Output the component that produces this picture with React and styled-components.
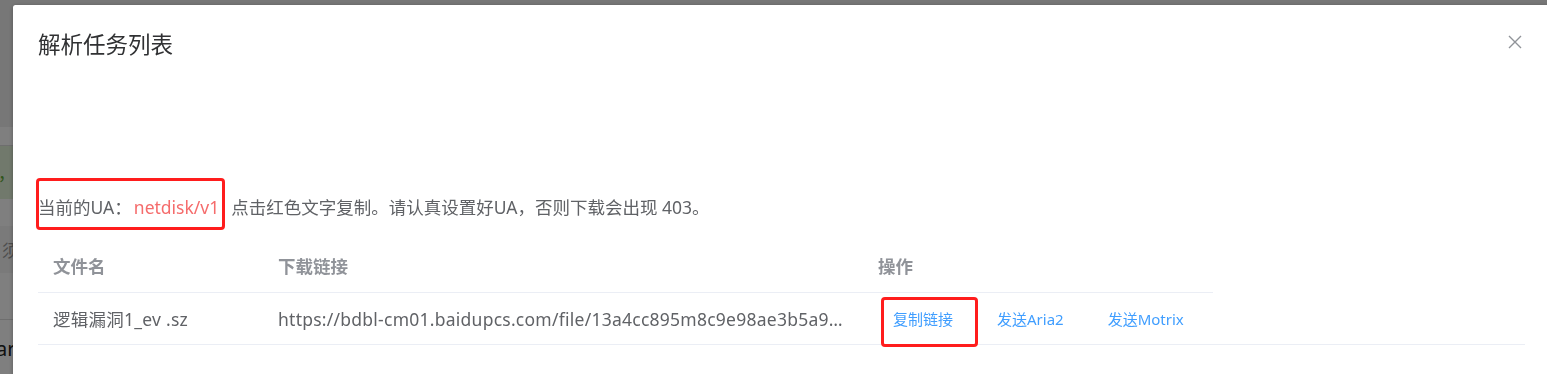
import React from "react";
import styled, { createGlobalStyle, css } from "styled-components";

const GlobalStyle = createGlobalStyle`
  html, body {
    margin: 0;
    padding: 0;
    overflow: hidden;
    background: #fff;
  }
  body {
    font-family: "Noto Sans", "Noto Sans CJK SC", sans-serif;
  }
`;

const tasks = [
  {
    name: "逻辑漏洞1_ev .sz",
    link: "https://bdbl-cm01.baidupcs.com/file/13a4cc895m8c9e98ae3b5a9f0c2d7e41b?bkt=en-2e2b5030",
  },
];

function CloseIcon() {
  return (
    <svg width="14" height="14" viewBox="0 0 14 14" fill="none">
      <path d="M1 1L13 13M13 1L1 13" stroke="#909399" strokeWidth="1.4" />
    </svg>
  );
}

function App() {
  return (
    <>
      <GlobalStyle />
      <Page>
        <PageRow $h={127} $bg="#eeeeee" />
        <PageRow $h={18} $bg="#ffffff" $line />
        <PageRow $h={53} $bg="#e2f2d9">
          <GreenText>，[</GreenText>
        </PageRow>
        <PageRow $h={27} $bg="#ffffff" />
        <PageRow $h={47} $bg="#f4f4f4">
          <GrayText>须</GrayText>
        </PageRow>
        <PageRow $h={46} $bg="#ffffff" $line />
        <PageRow $h={56} $bg="#ffffff">
          <DarkText>ar</DarkText>
        </PageRow>
      </Page>

      <Overlay>
        <Dialog>
          <Header>
            <Title>解析任务列表</Title>
            <CloseButton aria-label="close">
              <CloseIcon />
            </CloseButton>
          </Header>

          <Body>
            <UaLine>
              <Marked>
                当前的UA：<UaValue>netdisk/v1</UaValue>
              </Marked>
              <Hint>点击红色文字复制。请认真设置好UA，否则下载会出现 403。</Hint>
            </UaLine>

            <TableWrap>
              <Table>
                <colgroup>
                  <col style={{ width: 225 }} />
                  <col style={{ width: 600 }} />
                  <col style={{ width: 350 }} />
                </colgroup>
                <thead>
                  <tr>
                    <Th>文件名</Th>
                    <Th>下载链接</Th>
                    <Th>操作</Th>
                  </tr>
                </thead>
                <tbody>
                  {tasks.map((t) => (
                    <tr key={t.link}>
                      <Td>
                        <Cell>{t.name}</Cell>
                      </Td>
                      <Td>
                        <Cell>{t.link}</Cell>
                      </Td>
                      <Td>
                        <Actions>
                          <LinkButton $annotated>复制链接</LinkButton>
                          <LinkButton>发送Aria2</LinkButton>
                          <LinkButton>发送Motrix</LinkButton>
                        </Actions>
                      </Td>
                    </tr>
                  ))}
                </tbody>
              </Table>
            </TableWrap>
          </Body>
        </Dialog>
      </Overlay>
    </>
  );
}

const Page = styled.div`
  width: 1547px;
  height: 374px;
  display: flex;
  flex-direction: column;
`;

const PageRow = styled.div`
  height: ${(p) => p.$h}px;
  background: ${(p) => p.$bg};
  border-bottom: ${(p) => (p.$line ? "1px solid #dcdcdc" : "none")};
  display: flex;
  align-items: center;
  font-size: 17px;
  flex-shrink: 0;
`;

const GreenText = styled.span`
  color: #5daa32;
  margin-left: -2px;
`;

const GrayText = styled.span`
  color: #999;
  margin-left: 2px;
`;

const DarkText = styled.span`
  color: #222;
  font-size: 20px;
  margin-left: -4px;
`;

const Overlay = styled.div`
  position: fixed;
  inset: 0;
  background: rgba(0, 0, 0, 0.5);
  padding: 5px 0 0 13px;
  box-sizing: border-box;
`;

const Dialog = styled.div`
  width: 1537px;
  background: #fff;
  border-radius: 2.5px;
  box-shadow: 0 1px 4px rgba(0, 0, 0, 0.3);
  box-sizing: border-box;
  font-family: "Noto Sans", "Noto Sans CJK SC", sans-serif;
`;

const Header = styled.div`
  position: relative;
  padding: 25px 25px 12.5px;
`;

const Title = styled.span`
  display: block;
  font-size: 22.5px;
  line-height: 30px;
  color: #303133;
`;

const CloseButton = styled.button`
  position: absolute;
  top: 27px;
  right: 25px;
  width: 20px;
  height: 20px;
  padding: 0;
  border: none;
  background: transparent;
  display: flex;
  align-items: center;
  justify-content: center;
  cursor: pointer;
`;

const Body = styled.div`
  padding: 37.5px 25px;
  color: #606266;
  font-size: 17.5px;
`;

const UaLine = styled.div`
  margin-top: 84px;
  line-height: 26px;
  display: flex;
  align-items: center;
  gap: 12px;
`;

const annotation = css`
  position: relative;
  &::after {
    content: "";
    position: absolute;
    border: 3px solid #ff1d1d;
    border-radius: 4px;
    pointer-events: none;
  }
`;

const Marked = styled.span`
  ${annotation}
  &::after {
    top: -16px;
    bottom: -10px;
    left: -2px;
    right: -6px;
  }
`;

const UaValue = styled.span`
  color: #f56c6c;
  margin-left: 2px;
  cursor: pointer;
`;

const Hint = styled.span`
  color: #606266;
`;

const TableWrap = styled.div`
  margin-top: 21px;
  border-bottom: 1px solid #ebeef5;
`;

const Table = styled.table`
  width: 1175px;
  table-layout: fixed;
  border-collapse: collapse;
`;

const Th = styled.th`
  text-align: left;
  font-weight: 700;
  color: #909399;
  font-size: 17.5px;
  line-height: 23px;
  padding: 14px 15px;
  border-bottom: 1px solid #ebeef5;
`;

const Td = styled.td`
  padding: 15px 15px 13px;
  line-height: 23px;
  color: #606266;
  font-size: 17.5px;
`;

const Cell = styled.div`
  white-space: nowrap;
  overflow: hidden;
  text-overflow: ellipsis;
  letter-spacing: 0.25px;
`;

const Actions = styled.div`
  display: flex;
  align-items: center;
  gap: 14px;
`;

const LinkButton = styled.button`
  border: none;
  background: transparent;
  padding: 0 15px;
  line-height: 23px;
  font-family: inherit;
  font-size: 15px;
  color: #409eff;
  cursor: pointer;
  white-space: nowrap;
  ${(p) =>
    p.$annotated &&
    css`
      ${annotation}
      &::after {
        top: -11px;
        bottom: -16px;
        left: 3px;
        right: -10px;
      }
    `}
`;

export default App;
